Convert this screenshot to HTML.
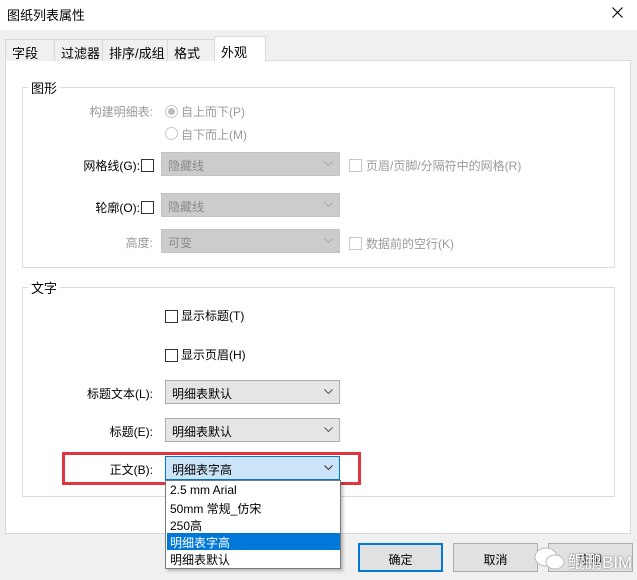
<!DOCTYPE html>
<html><head><meta charset="utf-8"><style>
*{box-sizing:border-box;margin:0;padding:0}
body{width:637px;height:580px;background:#f0f0f0;font-family:"Liberation Sans","Noto Sans CJK SC",sans-serif;font-size:12px;color:#000;position:relative;overflow:hidden}
.a{position:absolute;white-space:nowrap}
.title{left:0;top:0;width:637px;height:30px;background:#fff}
.tab{top:39px;height:22px;border:1px solid #d9d9d9;border-bottom:none;background:#f0f0f0;padding:3px 0 0 6px;font-size:13px}
.panel{left:5px;top:60px;width:626px;height:474px;background:#fff;border:1px solid #d9d9d9}
.grp{border:1px solid #dcdcdc}
.gl{background:#fff;padding:0 3px;font-size:13px}
.lbl{text-align:right;font-size:12px}
.dis{color:#9a9a9a}
.cb{width:13px;height:13px;border:1px solid #333;background:#fff}
.cbd{border-color:#c8c8c8}
.combo{height:24px;border:1px solid #adadad;background:#e5e5e5;padding:4px 0 0 6px;font-size:12px}
.combo.d{background:#cccccc;border-color:#c4c4c4;color:#8a8a8a}
.combo svg{position:absolute;right:6px;top:8px}
.btn{top:543px;height:29px;width:85px;border:1px solid #adadad;background:#e1e1e1;text-align:center;padding-top:7px;font-size:12px}
.li{left:1px;width:173px;height:17px;padding:1px 0 0 3px;font-size:12px}
</style></head><body>
<div class="a title"></div>
<div class="a" style="left:7px;top:5px;font-size:13px">图纸列表属性</div>
<svg class="a" style="left:612px;top:7px" width="11" height="11"><path d="M0.5 0.5L10.5 10.5M10.5 0.5L0.5 10.5" stroke="#000" stroke-width="1.1"/></svg>

<div class="a panel"></div>
<div class="a tab" style="left:5px;width:50px">字段</div>
<div class="a tab" style="left:54px;width:49px">过滤器</div>
<div class="a tab" style="left:102px;width:66px">排序/成组</div>
<div class="a tab" style="left:167px;width:48px">格式</div>
<div class="a tab" style="left:214px;top:36px;height:26px;width:52px;background:#fff;border-color:#d9d9d9;padding-top:5px">外观</div>

<div class="a grp" style="left:22px;top:87px;width:593px;height:181px"></div>
<div class="a gl" style="left:28px;top:78px">图形</div>
<div class="a lbl dis" style="left:60px;top:103px;width:93px">构建明细表:</div>
<div class="a" style="left:165px;top:105px;width:13px;height:13px;border:1px solid #c8c8c8;border-radius:50%;background:#fff"><div style="margin:2px;width:7px;height:7px;border-radius:50%;background:#bcbcbc"></div></div>
<div class="a dis" style="left:181px;top:103px">自上而下(P)</div>
<div class="a" style="left:165px;top:127px;width:13px;height:13px;border:1px solid #c8c8c8;border-radius:50%;background:#fff"></div>
<div class="a dis" style="left:181px;top:126px">自下而上(M)</div>

<div class="a lbl" style="left:40px;top:157px;width:100px">网格线(G):</div>
<div class="a cb" style="left:141px;top:159px"></div>
<div class="a combo d" style="left:161px;top:152px;width:179px">隐藏线<svg width="9" height="5"><path d="M0.5 0.5L4.5 4.5L8.5 0.5" fill="none" stroke="#aaa"/></svg></div>
<div class="a cb cbd" style="left:349px;top:159px"></div>
<div class="a dis" style="left:366px;top:157px">页眉/页脚/分隔符中的网格(R)</div>

<div class="a lbl" style="left:40px;top:199px;width:100px">轮廓(O):</div>
<div class="a cb" style="left:141px;top:201px"></div>
<div class="a combo d" style="left:161px;top:193px;width:179px">隐藏线<svg width="9" height="5"><path d="M0.5 0.5L4.5 4.5L8.5 0.5" fill="none" stroke="#aaa"/></svg></div>

<div class="a lbl dis" style="left:60px;top:234px;width:93px">高度:</div>
<div class="a combo d" style="left:161px;top:229px;width:179px">可变<svg width="9" height="5"><path d="M0.5 0.5L4.5 4.5L8.5 0.5" fill="none" stroke="#aaa"/></svg></div>
<div class="a cb cbd" style="left:349px;top:237px"></div>
<div class="a dis" style="left:366px;top:235px">数据前的空行(K)</div>

<div class="a grp" style="left:22px;top:287px;width:593px;height:210px"></div>
<div class="a gl" style="left:28px;top:278px">文字</div>
<div class="a cb" style="left:165px;top:310px"></div>
<div class="a" style="left:181px;top:307px">显示标题(T)</div>
<div class="a cb" style="left:165px;top:349px"></div>
<div class="a" style="left:181px;top:346px">显示页眉(H)</div>

<div class="a lbl" style="left:50px;top:385px;width:103px">标题文本(L):</div>
<div class="a combo" style="left:165px;top:380px;width:175px">明细表默认<svg width="9" height="5"><path d="M0.5 0.5L4.5 4.5L8.5 0.5" fill="none" stroke="#555"/></svg></div>
<div class="a lbl" style="left:50px;top:423px;width:103px">标题(E):</div>
<div class="a combo" style="left:165px;top:418px;width:175px">明细表默认<svg width="9" height="5"><path d="M0.5 0.5L4.5 4.5L8.5 0.5" fill="none" stroke="#555"/></svg></div>

<div class="a" style="left:62px;top:452px;width:299px;height:33px;border:3px solid #e0353f"></div>
<div class="a lbl" style="left:50px;top:461px;width:103px">正文(B):</div>
<div class="a combo" style="left:165px;top:456px;width:175px;background:#cce4f7;border-color:#0078d7">明细表字高<svg width="9" height="5"><path d="M0.5 0.5L4.5 4.5L8.5 0.5" fill="none" stroke="#333"/></svg></div>

<div class="a" style="left:165px;top:480px;width:176px;height:89px;background:#fff;border:1px solid #7a7a7a;box-shadow:2px 2px 3px rgba(0,0,0,.25)">
<div class="a li" style="top:1px">2.5 mm Arial</div>
<div class="a li" style="top:18px">50mm 常规_仿宋</div>
<div class="a li" style="top:35px">250高</div>
<div class="a li" style="top:52px;background:#0078d7;color:#fff">明细表字高</div>
<div class="a li" style="top:69px">明细表默认</div>
</div>

<div class="a btn" style="left:358px;border:2px solid #0078d7;padding-top:6px">确定</div>
<div class="a btn" style="left:453px">取消</div>
<div class="a btn" style="left:548px">应用</div>
<svg class="a" style="left:533px;top:546px" width="34" height="26"><ellipse cx="13" cy="11" rx="11" ry="9" fill="#fff" stroke="#bbb"/><ellipse cx="22" cy="16" rx="9" ry="7" fill="#fff" stroke="#bbb"/></svg>
<div class="a" style="left:568px;top:548px;font-size:17px;color:#fff;text-shadow:0 0 2px #666">鲲鹏BIM</div>
</body></html>
